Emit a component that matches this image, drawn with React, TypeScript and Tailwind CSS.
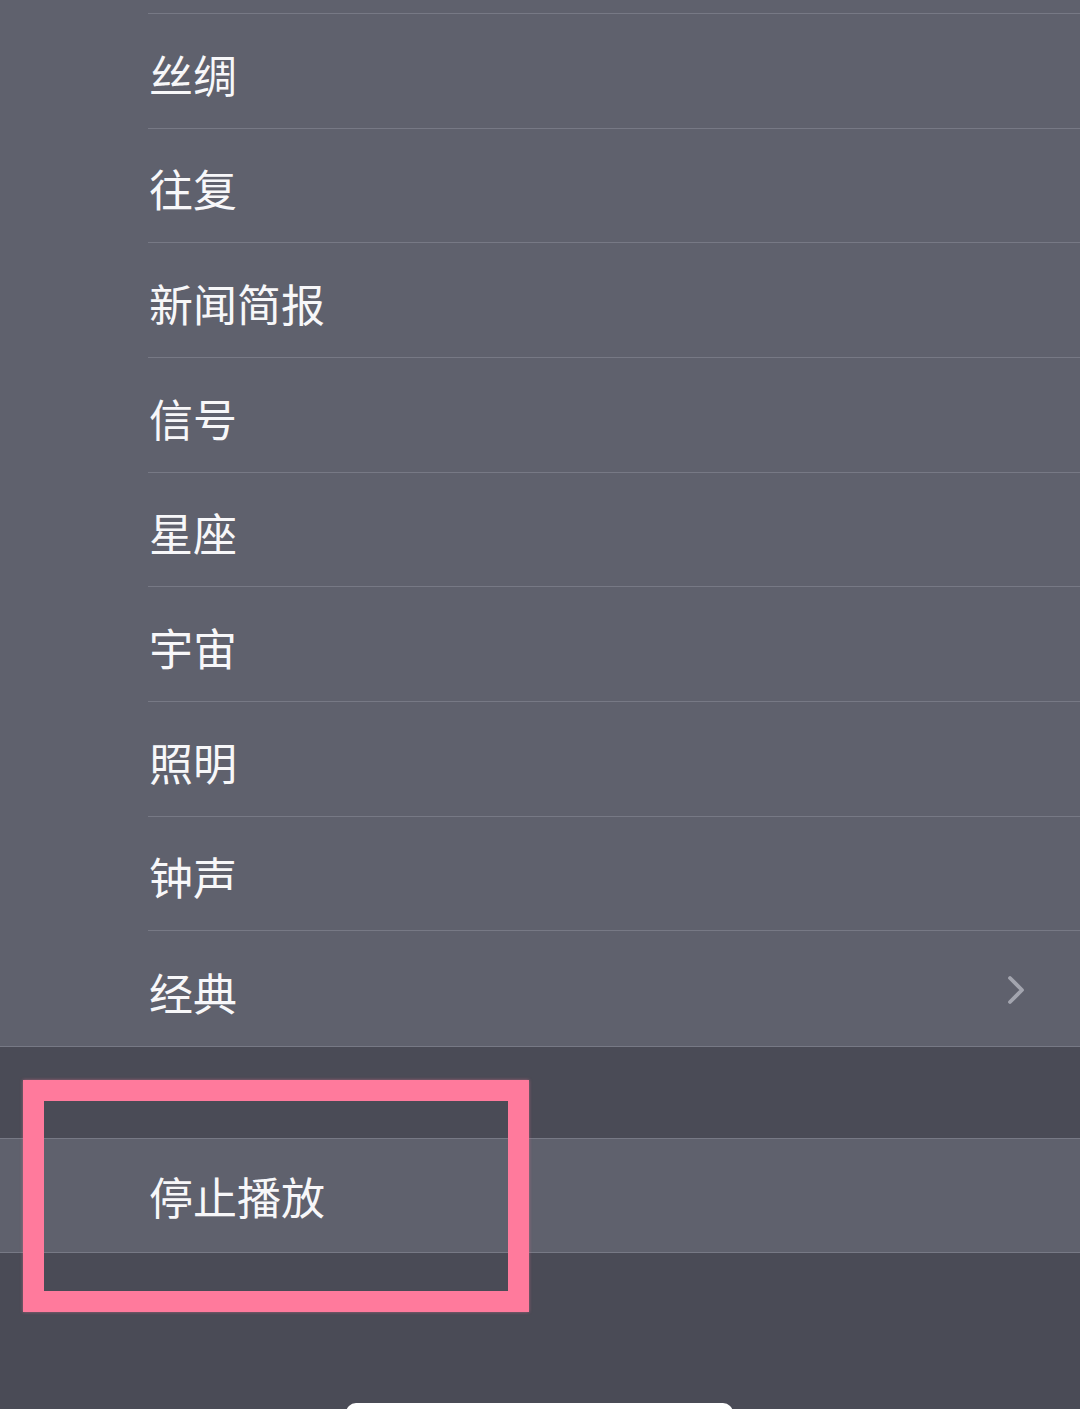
const items = ['丝绸', '往复', '新闻简报', '信号', '星座', '宇宙', '照明', '钟声', '经典'];

export default function App() {
  return (
    <div
      className="relative w-[1080px] h-[1409px] overflow-hidden bg-[#4a4b56] text-[#f7f7f9]"
      style={{ fontFamily: '"Noto Sans CJK SC", "Noto Sans", sans-serif' }}
    >
      {/* Sound list */}
      <div className="bg-[#5f616d] border-b border-[#777985]">
        <div className="h-[14px] pl-[148px]">
          <div className="h-full border-b border-[#777985]" />
        </div>
        {items.map((name, i) => (
          <div key={name} className="pl-[148px]">
            <div
              className={`h-[114.67px] flex items-center justify-between pr-[54px] ${
                i < items.length - 1 ? 'border-b border-[#777985]' : ''
              }`}
            >
              <span className="text-[44px] leading-none pl-[1px] pt-[6px]">{name}</span>
              {name === '经典' && (
                <svg width="20" height="30" viewBox="0 0 20 30" fill="none" className="mt-[2px]">
                  <path d="M4 3l12 12-12 12" stroke="#a3a5af" strokeWidth="3.8" strokeLinecap="round" strokeLinejoin="round" />
                </svg>
              )}
            </div>
          </div>
        ))}
      </div>

      {/* Gap */}
      <div className="h-[91px]" />

      {/* Stop */}
      <div className="h-[115px] bg-[#5f616d] border-y border-[#777985] flex items-center pl-[149px]">
        <span className="text-[44px] leading-none pt-[2px]">停止播放</span>
      </div>

      {/* Highlight box */}
      <div className="absolute left-[23px] top-[1080px] w-[506px] h-[232px] border-[21px] border-[#ff7a9c] shadow-[0_0_3px_rgba(255,122,156,0.5)]" />

      {/* Bottom sheet edge */}
      <div className="absolute left-[346px] top-[1403px] w-[387px] h-[20px] bg-white rounded-t-[10px]" />
    </div>
  );
}
